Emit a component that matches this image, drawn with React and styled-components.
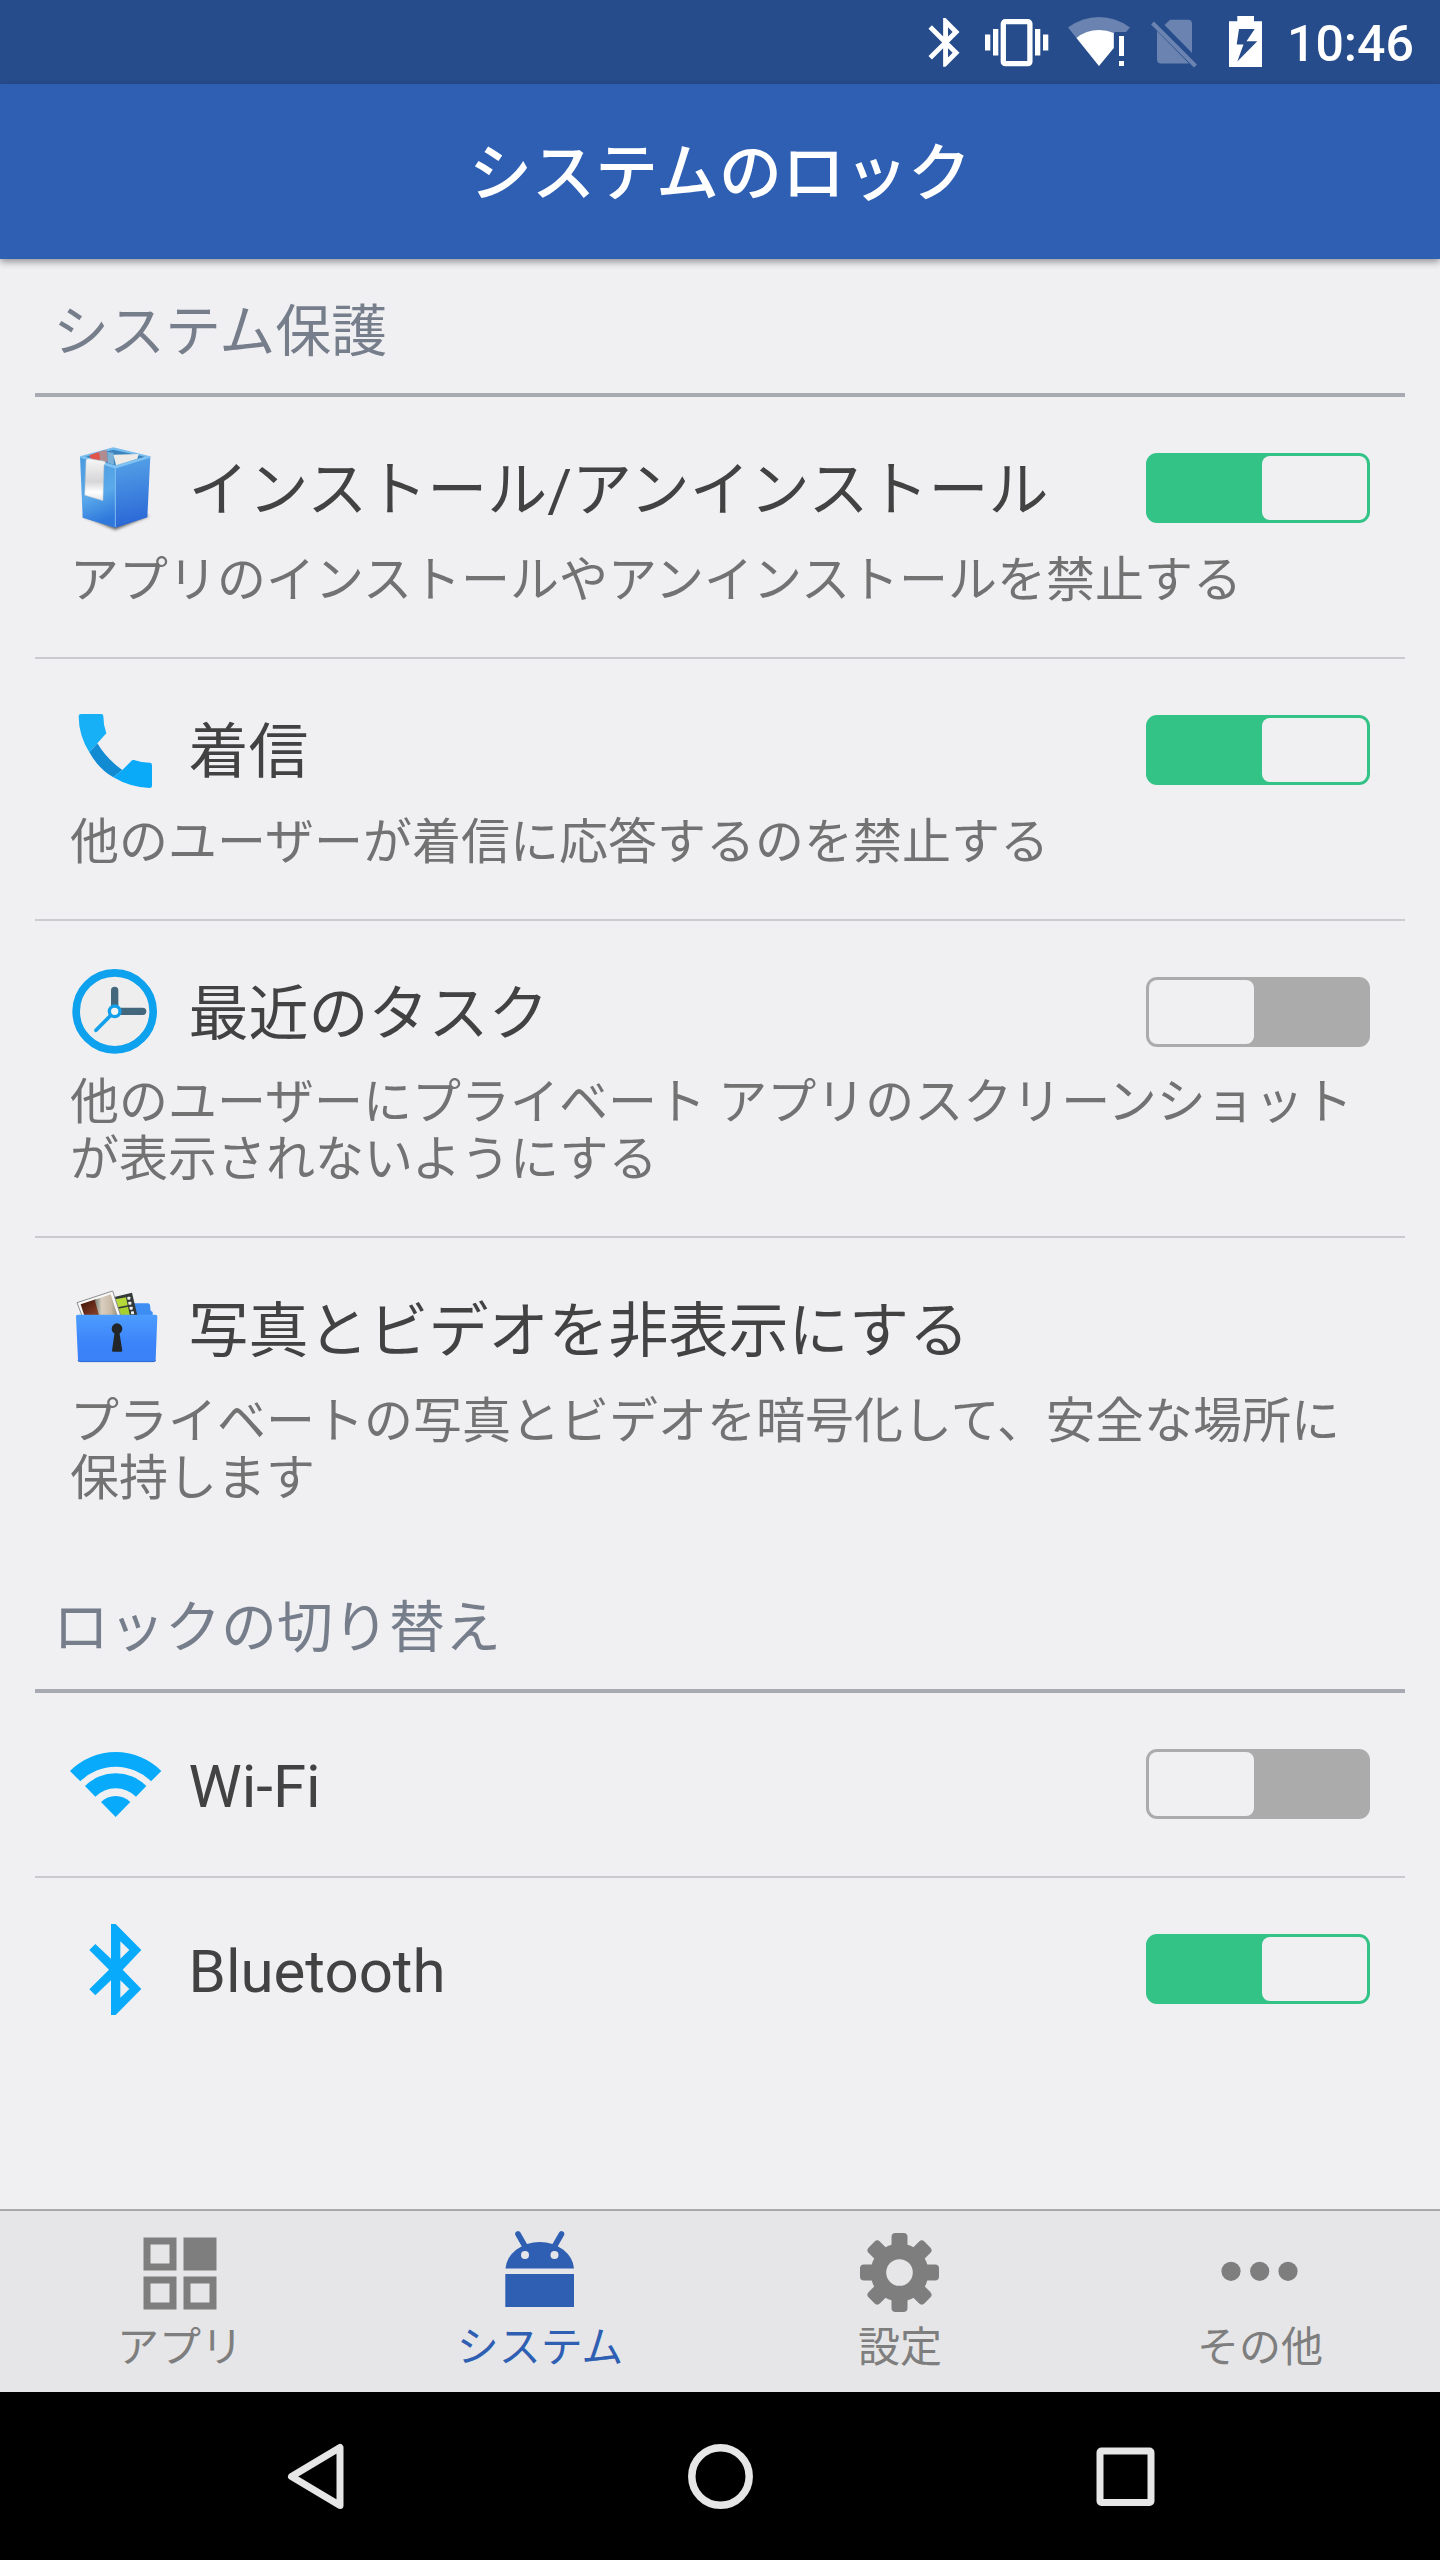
import React from "react";
import styled, { createGlobalStyle } from "styled-components";

const Global = createGlobalStyle`
  * { box-sizing: border-box; }
  body {
    margin: 0;
    background: #f0f0f3;
    font-family: Roboto, "Noto Sans CJK JP", sans-serif;
  }
  svg { display: block; flex: none; }
`;

const Screen = styled.div`
  width: 1440px;
  height: 2560px;
  display: flex;
  flex-direction: column;
  overflow: hidden;
  background: #f0f0f3;
`;

const StatusBar = styled.header`
  height: 84px;
  flex: none;
  display: flex;
  justify-content: flex-end;
  align-items: center;
  padding-right: 28px;
  background: #264c8c;
`;

const StatusIcon = styled.svg`
  width: ${(p) => p.$w}px;
  height: 52px;
  margin-right: ${(p) => p.$gap}px;
`;

const Time = styled.span`
  width: 125px;
  white-space: nowrap;
  font-size: 50px;
  font-weight: 500;
  line-height: 60px;
  padding-top: 4px;
  color: #fff;
`;

const TitleBar = styled.div`
  height: 175px;
  flex: none;
  display: flex;
  justify-content: center;
  align-items: center;
  background: #2e5fb2;
  box-shadow: 0 3px 7px rgba(0, 0, 0, 0.38);
`;

const PageTitle = styled.h1`
  margin: 0;
  padding-top: 4px;
  font-size: 63px;
  font-weight: 500;
  line-height: 80px;
  color: #fff;
`;

const Content = styled.main`
  flex: 1;
  min-height: 0;
  padding: 0 35px;
`;

const SectionTitle = styled.h2`
  margin: 0;
  height: 138px;
  padding: 33px 0 0 18px;
  border-bottom: 4px solid #a7abb1;
  font-size: 56px;
  font-weight: 400;
  line-height: 80px;
  color: #777e8b;
`;

const Row = styled.section`
  height: ${(p) => p.$height}px;
  padding: 45px 35px 0;
  border-bottom: ${(p) => (p.$last ? "none" : "2px solid #c9cbcf")};
`;

const RowMain = styled.div`
  height: 92px;
  display: flex;
  align-items: center;
`;

const RowIcon = styled.svg`
  width: 92px;
  height: 92px;
`;

const RowTitle = styled.span`
  flex: 1;
  margin-left: 26.5px;
  padding-top: 6px;
  font-size: 60px;
  line-height: 80px;
  white-space: nowrap;
  color: #424242;
`;

const Description = styled.p`
  margin: ${(p) => p.$top}px 0 0;
  font-size: 49px;
  line-height: 57px;
  white-space: nowrap;
  color: #727272;
`;

const Toggle = styled.div`
  width: 224px;
  height: 70px;
  flex: none;
  display: flex;
  justify-content: ${(p) => (p.$on ? "flex-end" : "flex-start")};
  padding: 3.3px;
  border-radius: 11px;
  background: ${(p) => (p.$on ? "#33c386" : "#ababab")};
`;

const Knob = styled.div`
  width: 105px;
  border-radius: 8px;
  background: #f0f0f3;
`;

const TabBar = styled.nav`
  height: 183px;
  flex: none;
  display: flex;
  border-top: 2px solid #a9a9ab;
  background: #e6e6e8;
`;

const Tab = styled.div`
  flex: 1;
  display: flex;
  flex-direction: column;
  align-items: center;
  padding-top: 17px;
  color: ${(p) => (p.$active ? "#2e5fb2" : "#7e7e7e")};
`;

const TabIcon = styled.svg`
  width: 90px;
  height: 90px;
`;

const TabLabel = styled.span`
  margin-top: 1px;
  font-size: 42px;
  line-height: 58px;
`;

const NavBar = styled.footer`
  height: 168px;
  flex: none;
  display: flex;
  justify-content: center;
  align-items: center;
  gap: 325px;
  background: #000;
`;

const NavIcon = styled.svg`
  width: 80px;
  height: 80px;
`;

const BoxIcon = () => (
  <RowIcon viewBox="60 36 276 276">
    <defs>
      <linearGradient id="boxL" x1="0" y1="0" x2="0.2" y2="1">
        <stop offset="0" stopColor="#4b9ade" />
        <stop offset="0.6" stopColor="#5aa9ea" />
        <stop offset="1" stopColor="#2f78dc" />
      </linearGradient>
      <linearGradient id="boxR" x1="0" y1="0" x2="0.1" y2="1">
        <stop offset="0" stopColor="#57a5e8" />
        <stop offset="1" stopColor="#2a67d6" />
      </linearGradient>
      <linearGradient id="paper" x1="0" y1="0" x2="0" y2="1">
        <stop offset="0" stopColor="#f6f6f6" />
        <stop offset="0.55" stopColor="#d6d6d8" />
        <stop offset="0.8" stopColor="#fff" />
        <stop offset="1" stopColor="#e4e4e6" />
      </linearGradient>
      <filter id="soft" x="-20%" y="-50%" width="140%" height="200%">
        <feGaussianBlur stdDeviation="5" />
      </filter>
    </defs>
    <path d="M98 258L196 300L298 258L196 230Z" fill="#222" opacity="0.65" filter="url(#soft)" />
    <path d="M90 79L190 52L301 79L196 113Z" fill="#79bdee" />
    <path d="M106 80L190 59L284 80L196 106Z" fill="#3a83bd" />
    <path d="M118 76L146 66L160 90L126 92Z" fill="#e0544c" />
    <path d="M148 64L170 60L174 96L150 92Z" fill="#b08b90" />
    <path d="M172 66L190 68L192 104L174 98Z" fill="#7ab2d8" />
    <path d="M190 74L266 72L262 86L198 106Z" fill="#ecebe8" />
    <path d="M90 79L196 112V293L98 263Z" fill="url(#boxL)" />
    <path d="M301 79L196 112V293L292 262Z" fill="url(#boxR)" />
    <path d="M90 80L196 113L301 80" fill="none" stroke="#82c5f5" strokeWidth="5" />
    <path d="M196 113V291" stroke="#7dbcf4" strokeWidth="3" />
    <path d="M108 90Q112 84 120 86L164 94Q170 98 162 106L159 212L104 196Z" fill="url(#paper)" stroke="#a9bccb" strokeWidth="1.5" />
  </RowIcon>
);

const PhoneIcon = () => (
  <RowIcon viewBox="60 42 276 276">
    <path d="M118 187Q145 236 190 262L217 240Q170 207 142 160Z" fill="#128bd3" />
    <path d="M93 72H154Q160 72 160 79Q160 104 169 130L142 160L118 187Q86 136 86 79Q86 72 93 72Z" fill="#17aff5" />
    <path d="M217 240L246 211Q248 209 252 210Q274 218 299 218Q306 218 306 225V287Q306 294 299 294Q240 292 190 262Z" fill="#0aaaf8" />
  </RowIcon>
);

const ClockIcon = () => (
  <RowIcon viewBox="60 48 276 276">
    <circle cx="194" cy="184" r="115.5" fill="#eee" stroke="#0ea1ed" strokeWidth="23" />
    <path d="M194 121V184H278" fill="none" stroke="#43677c" strokeWidth="22" strokeLinecap="round" />
    <path d="M194 184L138 241" stroke="#12a0ea" strokeWidth="11" strokeLinecap="round" />
    <circle cx="194" cy="184" r="16" fill="#f2f4f6" stroke="#12a0ea" strokeWidth="10" />
  </RowIcon>
);

const FolderIcon = () => (
  <RowIcon viewBox="60 39 276 276">
    <defs>
      <linearGradient id="folder" x1="0" y1="0" x2="0" y2="1">
        <stop offset="0" stopColor="#4d9dff" />
        <stop offset="0.6" stopColor="#3c84fa" />
        <stop offset="1" stopColor="#3a80f8" />
      </linearGradient>
      <linearGradient id="photoL" x1="0" y1="0" x2="1" y2="1">
        <stop offset="0" stopColor="#3c1208" />
        <stop offset="1" stopColor="#93452c" />
      </linearGradient>
      <linearGradient id="photoR" x1="0" y1="0" x2="1" y2="0">
        <stop offset="0" stopColor="#707b70" />
        <stop offset="0.3" stopColor="#d9cfc0" />
        <stop offset="0.7" stopColor="#c9baa6" />
        <stop offset="1" stopColor="#8f8b7c" />
      </linearGradient>
    </defs>
    <path d="M240 104Q241 100 246 100H294Q299 100 300 105L302 122L308 126V140H236Z" fill="#3d8df3" />
    <path d="M190 82L246 68L263 140H200Z" fill="#333936" />
    <path d="M196 88L228 82L233 106L202 112Z" fill="#b5d83a" />
    <path d="M205 116L234 110L240 138H210Z" fill="#a6cf30" />
    <g fill="#eef0ee">
      <rect x="232" y="80" width="9" height="9" rx="2" />
      <rect x="235" y="95" width="9" height="9" rx="2" />
      <rect x="239" y="110" width="9" height="9" rx="2" />
      <rect x="243" y="124" width="9" height="9" rx="2" />
    </g>
    <path d="M81 98L188 63L213 140H97Z" fill="#f8f8f8" stroke="#8c8c8c" strokeWidth="3" />
    <path d="M92 103L137 88L150 140H104Z" fill="url(#photoL)" />
    <path d="M134 89L182 73L204 140H148Z" fill="url(#photoR)" />
    <path d="M78 139Q78 134 83 134H317Q322 134 322 139L317 270Q317 276 311 276H90Q84 276 84 270Z" fill="url(#folder)" />
    <path d="M84 270Q84 275 90 275H311Q317 275 317 270" fill="none" stroke="#2b5fb8" strokeWidth="2" />
    <circle cx="201" cy="176" r="16" fill="#222629" />
    <path d="M194 186H208L217 242Q217 245 213 245H190Q186 245 186 242Z" fill="#222629" />
  </RowIcon>
);

const WifiIcon = () => (
  <RowIcon viewBox="60 24 276 276" fill="#08abfb">
    <path d="M60 123A194 194 0 0 1 334 123L303 154A150 150 0 0 0 91 154Z" />
    <path d="M105 168A130 130 0 0 1 289 168L258 200A86 86 0 0 0 136 200Z" />
    <path d="M153 216A62 62 0 0 1 241 216L197 261Z" />
  </RowIcon>
);

const BluetoothIcon = () => (
  <RowIcon viewBox="60 579 276 276" fill="#08abfb">
    <path
      fillRule="evenodd"
      d="M183 582H197L274 660L218 719L274 777L197 855H183V751L136 796L118 778L177 719L118 660L136 642L183 686ZM211 634V686L238 660ZM211 751V803L238 777Z"
    />
  </RowIcon>
);

const StatusIcons = () => (
  <>
    <StatusIcon $w={32} $gap={25} viewBox="928 16 32 52" fill="#fff">
      <g transform="translate(916.3 13.1) scale(2.44)">
        <path d="M17.71 7.71L12 2h-1v7.59L6.41 5 5 6.41 10.59 12 5 17.59 6.41 19 11 14.41V22h1l5.71-5.71-4.3-4.29 4.3-4.29zM13 5.83l1.88 1.88L13 9.59V5.83zm1.88 10.46L13 18.17v-3.76l1.88 1.88z" />
      </g>
    </StatusIcon>
    <StatusIcon $w={64} $gap={19} viewBox="985 16 64 52" fill="#fff">
      <rect x="985" y="34.5" width="5.3" height="16" />
      <rect x="993" y="29" width="5.3" height="26.5" />
      <rect x="1035" y="29" width="5.3" height="26.5" />
      <rect x="1043" y="34.5" width="5.3" height="16" />
      <rect x="1003.3" y="21.7" width="26.6" height="42" rx="2" fill="none" stroke="#fff" strokeWidth="5.3" />
    </StatusIcon>
    <StatusIcon $w={62} $gap={21} viewBox="1068 16 62 52">
      <path
        d="M1068 27.5Q1082 17 1099 17T1130 27.5L1126 32H1115L1113.5 33.5L1099 66Z"
        fill="#6a83b0"
      />
      <path d="M1113.5 33V66H1099Z" fill="#264c8c" />
      <path d="M1076.5 38Q1086 30 1099 30Q1107 30 1113.8 33V48L1099 66Z" fill="#fff" />
      <rect x="1119" y="36" width="5" height="20" fill="#fff" />
      <rect x="1119" y="61" width="5" height="5" fill="#fff" />
    </StatusIcon>
    <StatusIcon $w={46} $gap={32} viewBox="1151 16 46 52" fill="#6a83b0">
      <path d="M1157 31L1189 63.5H1161Q1157 63.5 1157 59.5Z" />
      <path d="M1164.5 25L1170 19.7H1188Q1192 19.7 1192 24V53Z" />
      <path d="M1151 24.5L1154 21.5L1197 64.5L1194 67.5Z" />
    </StatusIcon>
    <StatusIcon $w={33} $gap={25} viewBox="1229 16 33 52" fill="#fff">
      <path
        fillRule="evenodd"
        d="M1229 21.3H1237.3V16H1254V21.3H1262V67H1229ZM1239 29L1236.7 44.5H1243.5L1237.3 61.5L1257.3 41.3H1246.5L1254.7 29Z"
      />
    </StatusIcon>
  </>
);

const AppsTabIcon = () => (
  <TabIcon viewBox="135 2228 90 90" fill="none" stroke="currentColor" strokeWidth="7">
    <rect x="147" y="2241" width="26" height="26" />
    <rect x="187" y="2241" width="26" height="26" fill="currentColor" />
    <rect x="147" y="2280" width="26" height="26" />
    <rect x="187" y="2280" width="26" height="26" />
  </TabIcon>
);

const SystemTabIcon = () => (
  <TabIcon viewBox="495 2228 90 90" fill="currentColor">
    <path d="M505.5 2268.5A34.3 28 0 0 1 574 2268.5Z" />
    <path d="M518 2234L526 2248M561.5 2234L553.5 2248" stroke="currentColor" strokeWidth="5.6" strokeLinecap="round" />
    <rect x="505.3" y="2274" width="68.7" height="33" />
    <circle cx="525" cy="2255" r="4" fill="#e6e6e8" />
    <circle cx="554.5" cy="2255" r="4" fill="#e6e6e8" />
  </TabIcon>
);

const SettingsTabIcon = () => (
  <TabIcon viewBox="855 2228 90 90" fill="currentColor">
    {[0, 45, 90, 135].map((angle) => (
      <rect
        key={angle}
        x="891.5"
        y="2233"
        width="16"
        height="79"
        rx="4"
        transform={`rotate(${angle} 899.5 2272.5)`}
      />
    ))}
    <circle cx="899.5" cy="2272.5" r="29" />
    <circle cx="899.5" cy="2272.5" r="13.3" fill="#e6e6e8" />
  </TabIcon>
);

const MoreTabIcon = () => (
  <TabIcon viewBox="1215 2228 90 90" fill="currentColor">
    <circle cx="1231" cy="2271.3" r="9.6" />
    <circle cx="1259.7" cy="2271.3" r="9.6" />
    <circle cx="1288" cy="2271.3" r="9.6" />
  </TabIcon>
);

const protection = [
  {
    Icon: BoxIcon,
    title: "インストール/アンインストール",
    lines: ["アプリのインストールやアンインストールを禁止する"],
    on: true,
    height: 262,
    top: 18,
  },
  {
    Icon: PhoneIcon,
    title: "着信",
    lines: ["他のユーザーが着信に応答するのを禁止する"],
    on: true,
    height: 262,
    top: 18,
  },
  {
    Icon: ClockIcon,
    title: "最近のタスク",
    lines: ["他のユーザーにプライベート アプリのスクリーンショット", "が表示されないようにする"],
    on: false,
    height: 317,
    top: 16,
  },
  {
    Icon: FolderIcon,
    title: "写真とビデオを非表示にする",
    lines: ["プライベートの写真とビデオを暗号化して、安全な場所に", "保持します"],
    height: 317,
    top: 18,
  },
];

const switches = [
  { Icon: WifiIcon, title: "Wi-Fi", on: false, height: 185 },
  { Icon: BluetoothIcon, title: "Bluetooth", on: true, height: 185 },
];

const tabs = [
  { Icon: AppsTabIcon, label: "アプリ" },
  { Icon: SystemTabIcon, label: "システム", active: true },
  { Icon: SettingsTabIcon, label: "設定" },
  { Icon: MoreTabIcon, label: "その他" },
];

const Section = ({ title, items }) => (
  <>
    <SectionTitle>{title}</SectionTitle>
    {items.map(({ Icon, title: name, lines, on, height, top }, i) => (
      <Row key={name} $height={height} $last={i === items.length - 1}>
        <RowMain>
          <Icon />
          <RowTitle>{name}</RowTitle>
          {on !== undefined && (
            <Toggle $on={on}>
              <Knob />
            </Toggle>
          )}
        </RowMain>
        {lines && (
          <Description $top={top}>
            {lines.map((line, n) => (
              <React.Fragment key={line}>
                {n > 0 && <br />}
                {line}
              </React.Fragment>
            ))}
          </Description>
        )}
      </Row>
    ))}
  </>
);

export default function App() {
  return (
    <Screen>
      <Global />
      <StatusBar>
        <StatusIcons />
        <Time>10:46</Time>
      </StatusBar>
      <TitleBar>
        <PageTitle>システムのロック</PageTitle>
      </TitleBar>
      <Content>
        <Section title="システム保護" items={protection} />
        <Section title="ロックの切り替え" items={switches} />
      </Content>
      <TabBar>
        {tabs.map(({ Icon, label, active }) => (
          <Tab key={label} $active={active}>
            <Icon />
            <TabLabel>{label}</TabLabel>
          </Tab>
        ))}
      </TabBar>
      <NavBar>
        <NavIcon viewBox="275 2436 80 80" fill="none" stroke="#e6e6e6" strokeWidth="7" strokeLinejoin="round">
          <path d="M291.5 2476.5L340 2447.5V2505.5Z" />
        </NavIcon>
        <NavIcon viewBox="680 2436 80 80" fill="none" stroke="#e6e6e6" strokeWidth="7.5">
          <circle cx="720.5" cy="2476.5" r="28.7" />
        </NavIcon>
        <NavIcon viewBox="1085 2436 80 80" fill="none" stroke="#e6e6e6" strokeWidth="7">
          <rect x="1100" y="2451" width="51" height="51.5" rx="1.5" />
        </NavIcon>
      </NavBar>
    </Screen>
  );
}
